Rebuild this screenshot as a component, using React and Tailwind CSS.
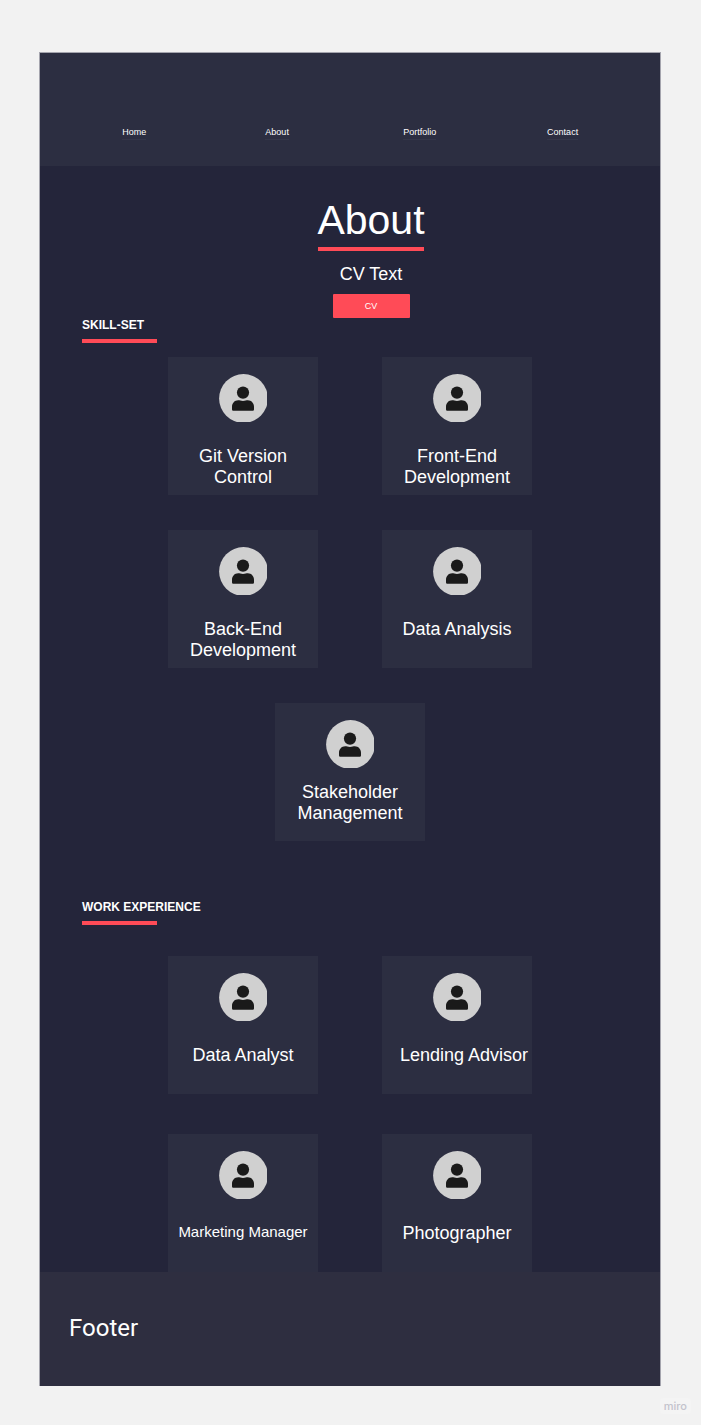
const navItems = ["Home", "About", "Portfolio", "Contact"];

const skills = [
  { title: "Git Version Control", text: "mt-6 px-5 text-[18px]" },
  { title: "Front-End Development", text: "mt-6 px-5 text-[18px]" },
  { title: "Back-End Development", text: "mt-6 px-5 text-[18px]" },
  { title: "Data Analysis", text: "mt-6 text-[18px]" },
  { title: "Stakeholder Management", text: "mt-[14px] px-5 text-[18px]" },
];

const jobs = [
  { title: "Data Analyst", text: "mt-6 text-[18px]" },
  { title: "Lending Advisor", text: "mt-6 pl-[14px] text-[18px]" },
  { title: "Marketing Manager", text: "mt-[22px] text-[15px]" },
  { title: "Photographer", text: "mt-6 text-[18px]" },
];

function Avatar() {
  return (
    <svg className="size-12 shrink-0" viewBox="0 0 48 48" aria-hidden="true">
      <circle cx="24.5" cy="24.5" r="24.4" fill="#d0d0d0" />
      <g fill="#1a1a1a" transform="translate(13 12.6)">
        <circle cx="11" cy="6" r="6.1" />
        <path d="M6.2 13.6C7.6 13.6 8.8 14.3 11 14.3S14.4 13.6 15.8 13.6C19.400 13.6 22 16.5 22 20.2V23A1.200 1.200 0 0 1 20.800 24.200H1.200A1.200 1.200 0 0 1 0 23V20.200C0 16.500 2.600 13.600 6.200 13.600Z" />
      </g>
    </svg>
  );
}

function Card({ title, text }) {
  return (
    <li className="flex h-[138px] w-[150px] flex-col items-center bg-[#2c2e41] pt-[17px]">
      <Avatar />
      <h3 className={"w-full text-center leading-[21px] " + text}>{title}</h3>
    </li>
  );
}

function SectionTitle({ children }) {
  return (
    <div className="pl-[42px]">
      <h2 className="text-[12px] leading-[14px] font-bold">{children}</h2>
      <div className="mt-[7px] h-1 w-[75px] bg-[#ff4b57]" />
    </div>
  );
}

export default function App() {
  return (
    <div className="min-h-screen bg-[#f2f2f2] pt-[52px] pr-10 pl-[39px] font-['Liberation_Sans',Arial,sans-serif] text-white">
      <div className="border border-b-0 border-[#a5a5ae] bg-[#24253a]">
        <header className="h-[113px] bg-[#2c2e41] pt-[73px] pr-[26px] pl-[23px]">
          <nav className="grid grid-cols-4 justify-items-center text-[9px] leading-3">
            {navItems.map((item) => (
              <a key={item} href={"#" + item.toLowerCase()} className="border-b border-[#343649] pb-px">
                {item}
              </a>
            ))}
          </nav>
        </header>

        <main>
          <section className="flex flex-col items-center pt-[30px] pl-[42px]">
            <h1 className="text-[41px] leading-[48px]">About</h1>
            <div className="mt-[3px] h-1 w-[106px] bg-[#ff4b57]" />
            <p className="mt-[11px] text-[18px] leading-6">CV Text</p>
            <button type="button" className="mt-2 h-6 w-[77px] rounded-[1px] bg-[#ff4b57] text-[9px] leading-3">
              CV
            </button>
          </section>

          <section>
            <SectionTitle>SKILL-SET</SectionTitle>
            <ul className="mx-auto mt-[14px] flex max-w-[364px] flex-wrap justify-center gap-x-16 gap-y-[35px]">
              {skills.map((skill) => (
                <Card key={skill.title} {...skill} />
              ))}
            </ul>
          </section>

          <section className="pt-[59px]">
            <SectionTitle>WORK EXPERIENCE</SectionTitle>
            <ul className="mx-auto mt-[31px] flex max-w-[364px] flex-wrap justify-center gap-x-16 gap-y-10">
              {jobs.map((job) => (
                <Card key={job.title} {...job} />
              ))}
            </ul>
          </section>
        </main>

        <footer className="h-[114px] bg-[#2e2e40] pt-[42px] pl-[29px] font-[Roboto,sans-serif] text-[24px] leading-7">
          Footer
        </footer>
      </div>

      <div className="-mr-[30px] flex justify-end pt-3">
        <span className="rounded-sm bg-[#f4f4f4] px-1 font-[Inter,sans-serif] text-[11px] leading-4 font-medium text-[#c3c3cc]">
          miro
        </span>
      </div>
    </div>
  );
}
